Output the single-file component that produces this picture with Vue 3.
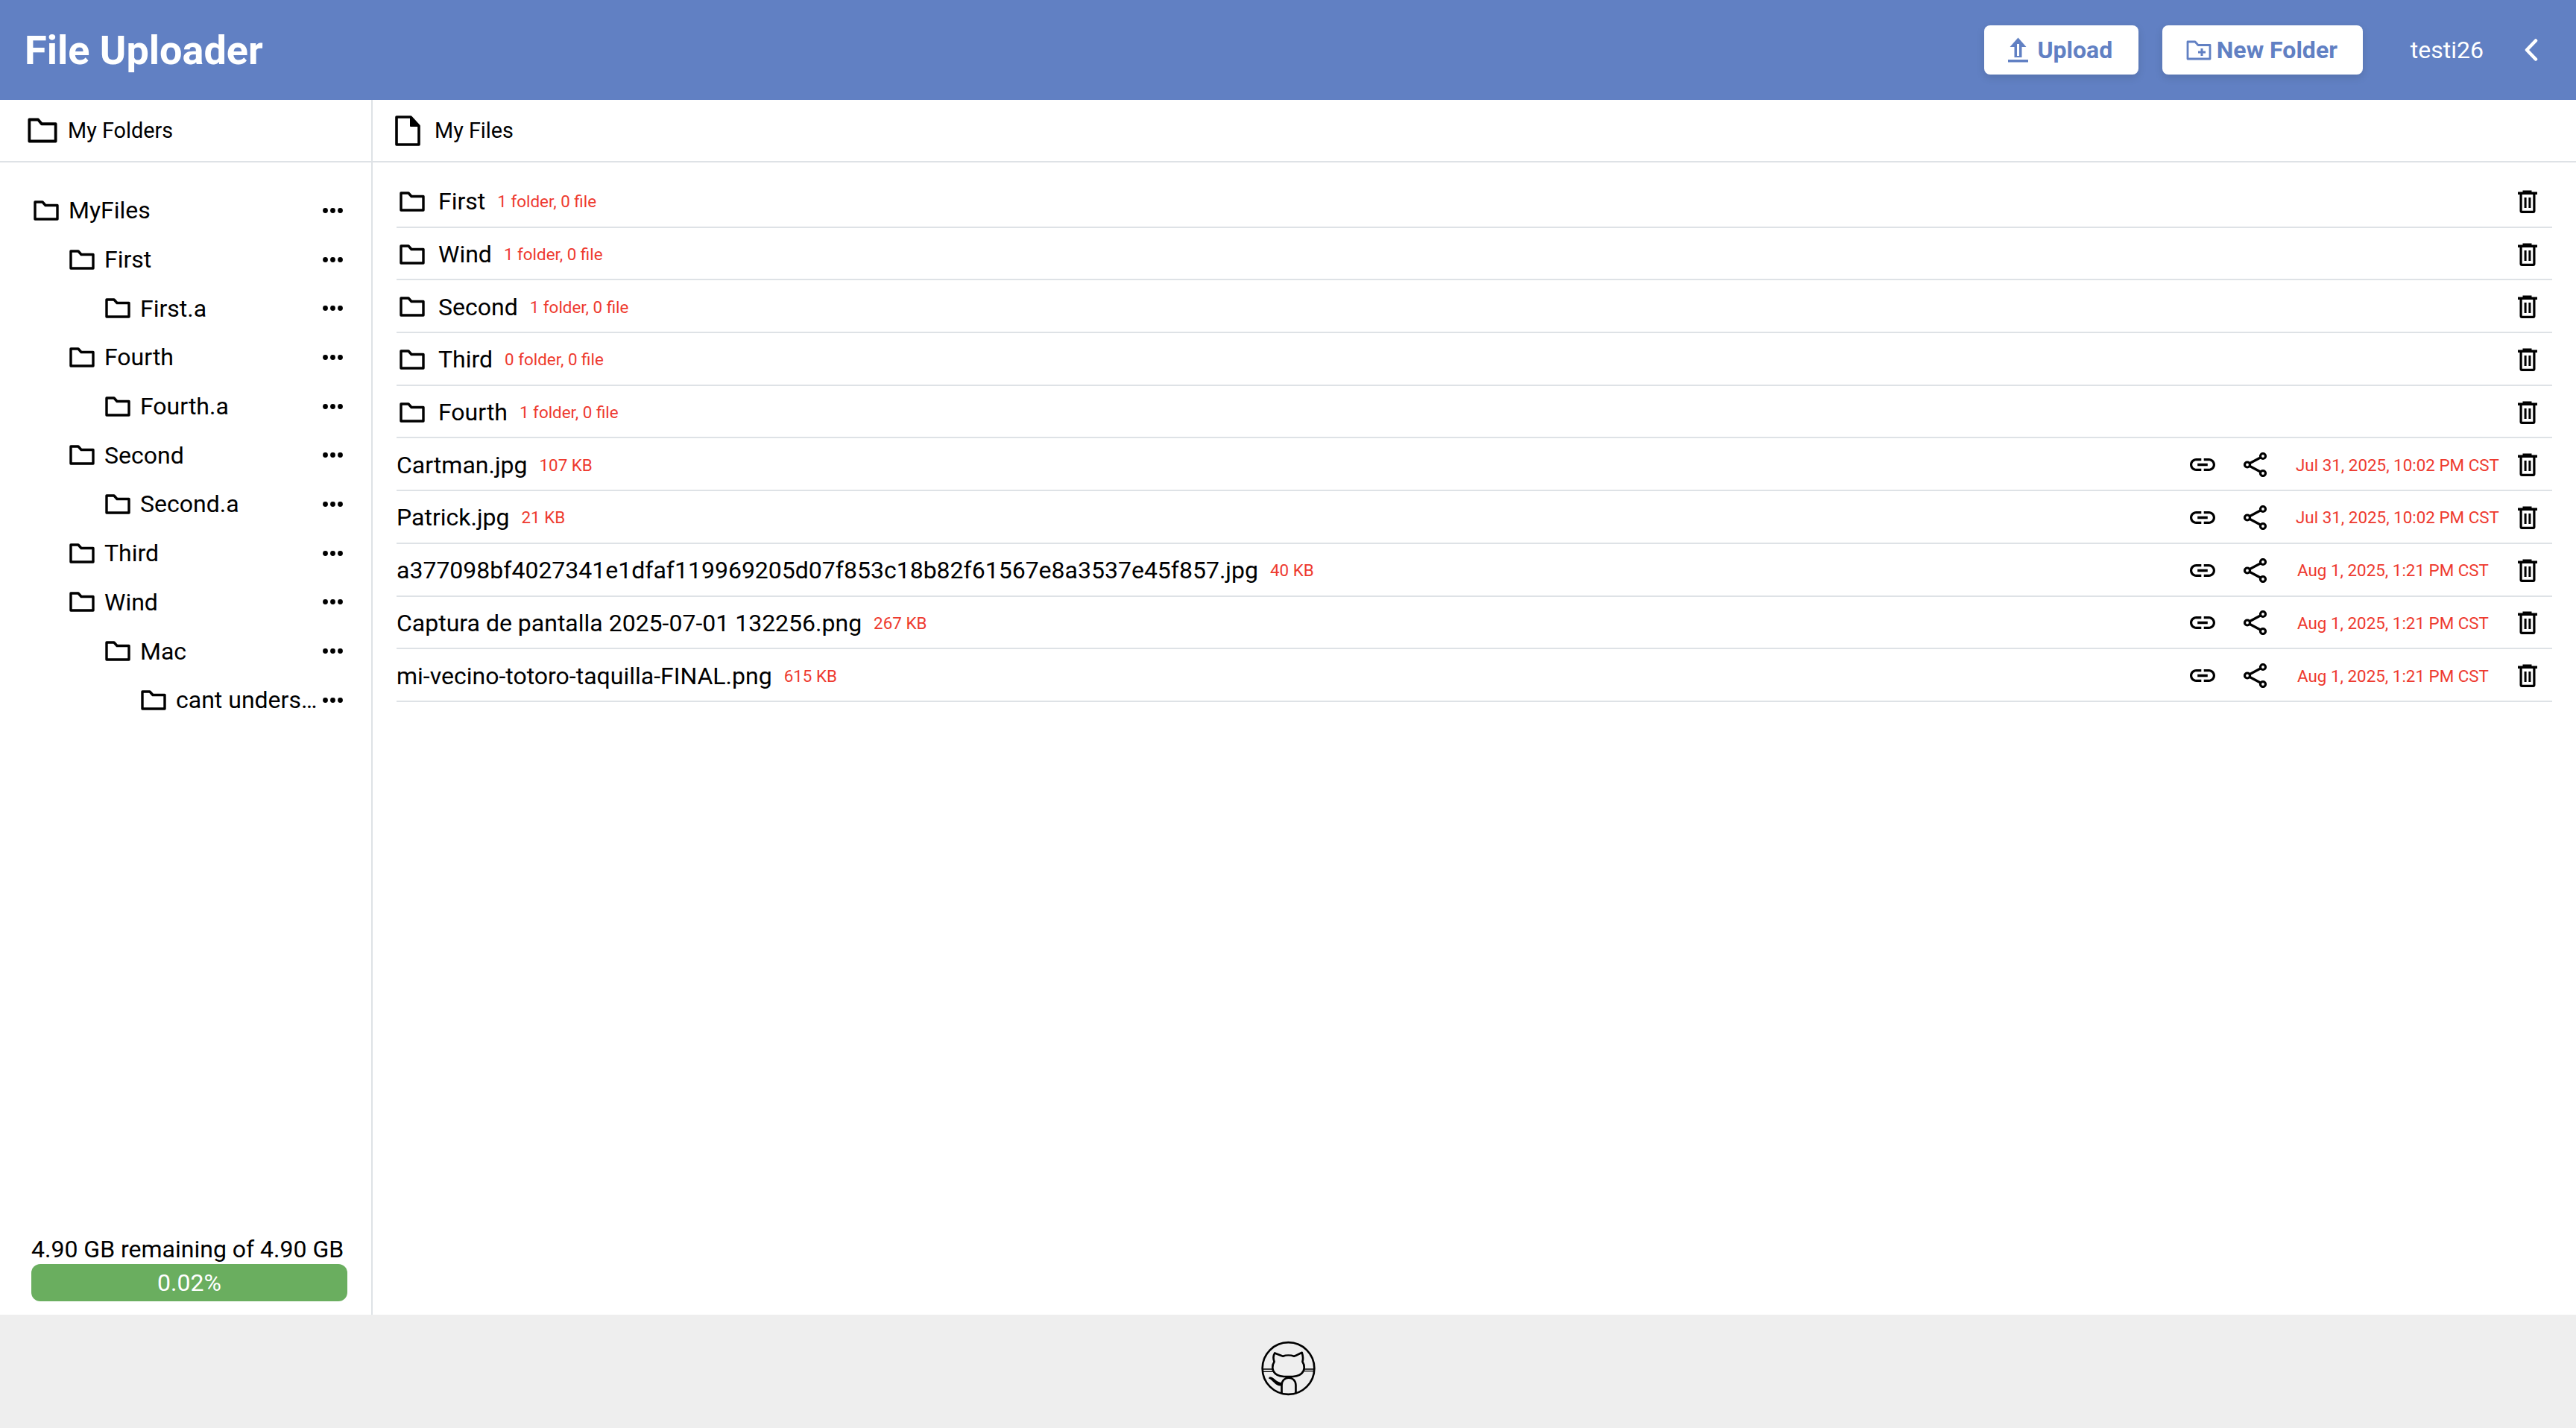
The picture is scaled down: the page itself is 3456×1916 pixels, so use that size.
<template>
  <div class="app">
    <header class="topbar">
      <h1 class="brand">File Uploader</h1>
      <div class="top-actions">
        <button class="btn btn-upload">
          <svg class="btn-icon" width="27" height="34" viewBox="0 0 27 34">
            <path d="M13.5 0.5 L24.5 13 H18.5 V27 H8.5 V13 H2.5 Z" fill="currentColor" />
            <rect x="12" y="9" width="3" height="16" fill="#fff" />
            <rect x="0" y="30" width="27" height="3.5" fill="currentColor" />
          </svg>
          <span>Upload</span>
        </button>
        <button class="btn btn-folder">
          <svg class="btn-icon" width="34" height="27" viewBox="0 0 34 27">
            <path d="M2 2 H12 L16 6.5 H32 V25 H2 Z" fill="none" stroke="currentColor" stroke-width="2.8" stroke-linejoin="round" />
            <path d="M21 11 V21 M16 16 H26" stroke="currentColor" stroke-width="3" />
          </svg>
          <span>New Folder</span>
        </button>
        <span class="username">testi26</span>
        <svg class="chevron" width="18" height="30" viewBox="0 0 18 30">
          <path d="M15 2.5 L3 15 L15 27.5" fill="none" stroke="#fff" stroke-width="4.5" stroke-linecap="round" stroke-linejoin="round" />
        </svg>
      </div>
    </header>

    <div class="body">
      <aside class="sidebar">
        <div class="pane-title side-title">
          <svg width="40" height="34" viewBox="0 0 34 27" preserveAspectRatio="none">
            <path :d="folderPath" fill="none" stroke="#000" stroke-width="3.2" stroke-linejoin="round" />
          </svg>
          <span>My Folders</span>
        </div>
        <ul class="tree">
          <li v-for="node in tree" :key="node.id" class="tree-row" :style="{ paddingLeft: node.depth * 48 + 'px' }">
            <svg class="folder" width="34" height="27" viewBox="0 0 34 27">
              <path :d="folderPath" fill="none" stroke="#000" stroke-width="3.4" stroke-linejoin="round" />
            </svg>
            <span class="tree-name">{{ node.name }}</span>
            <svg class="dots" width="27" height="7" viewBox="0 0 27 7">
              <circle cx="3.5" cy="3.5" r="3.4" />
              <circle cx="13.5" cy="3.5" r="3.4" />
              <circle cx="23.5" cy="3.5" r="3.4" />
            </svg>
          </li>
        </ul>
        <div class="storage">
          <div class="storage-text">4.90 GB remaining of 4.90 GB</div>
          <div class="storage-bar">0.02%</div>
        </div>
      </aside>

      <main class="content">
        <div class="pane-title files-title">
          <svg width="34" height="41" viewBox="0 0 34 41">
            <path d="M2 2 H21 L32 14 V39 H2 Z" fill="none" stroke="#000" stroke-width="3.6" stroke-linejoin="round" />
            <path d="M21 2 L32 14 H21 Z" stroke="#000" stroke-width="2" stroke-linejoin="round" />
          </svg>
          <span>My Files</span>
        </div>
        <ul class="rows">
          <li v-for="dir in folders" :key="dir.name" class="row">
            <svg class="row-folder" width="34" height="27" viewBox="0 0 34 27">
              <path :d="folderPath" fill="none" stroke="#000" stroke-width="3.4" stroke-linejoin="round" />
            </svg>
            <span class="row-name">{{ dir.name }}</span>
            <span class="meta">{{ dir.meta }}</span>
            <svg class="trash trash-end" width="26" height="31" viewBox="0 0 26 31">
              <path :d="trashLid" />
              <path :d="trashBody" fill="none" stroke="#000" stroke-width="3.2" />
              <rect x="8.6" y="10" width="3" height="14" />
              <rect x="14.4" y="10" width="3" height="14" />
            </svg>
          </li>
          <li v-for="file in files" :key="file.name" class="row">
            <span class="row-name">{{ file.name }}</span>
            <span class="meta">{{ file.size }}</span>
            <svg class="link" width="34" height="17" viewBox="2 7 20 10">
              <path d="M3.9 12c0-1.71 1.39-3.1 3.1-3.1h4V7H7c-2.76 0-5 2.24-5 5s2.24 5 5 5h4v-1.9H7c-1.71 0-3.1-1.39-3.1-3.1zM8 13h8v-2H8v2zm9-6h-4v1.9h4c1.71 0 3.1 1.39 3.1 3.1s-1.39 3.1-3.1 3.1h-4V17h4c2.76 0 5-2.24 5-5s-2.24-5-5-5z" />
            </svg>
            <svg class="share" width="31" height="33" viewBox="0 0 31 33">
              <path d="M22.5 7 L8.5 14.5 M8.5 18.5 L22.5 26" stroke="#000" stroke-width="3.2" fill="none" />
              <circle cx="26" cy="5" r="3.5" fill="none" stroke="#000" stroke-width="3.2" />
              <circle cx="5" cy="16.5" r="3.5" fill="none" stroke="#000" stroke-width="3.2" />
              <circle cx="26" cy="28" r="3.5" fill="none" stroke="#000" stroke-width="3.2" />
            </svg>
            <span class="date" :class="{ 'date-short': file.date.startsWith('Aug') }">{{ file.date }}</span>
            <svg class="trash" width="26" height="31" viewBox="0 0 26 31">
              <path :d="trashLid" />
              <path :d="trashBody" fill="none" stroke="#000" stroke-width="3.2" />
              <rect x="8.6" y="10" width="3" height="14" />
              <rect x="14.4" y="10" width="3" height="14" />
            </svg>
          </li>
        </ul>
      </main>
    </div>

    <footer class="footer">
      <svg width="73" height="74" viewBox="95 86 220 222">
        <circle cx="205" cy="197" r="105" fill="none" stroke="#000" stroke-width="8" />
        <path d="M150 135 C165 140 178 147 183 148 C195 143 215 143 228 148 C235 146 250 138 260 133 C265 150 265 160 262 170 C272 185 272 205 258 218 C240 235 170 235 152 218 C138 205 138 185 148 170 C144 160 144 145 150 135 Z" fill="none" stroke="#000" stroke-width="8" stroke-linejoin="round" />
        <path d="M178 300 V265 C178 225 235 225 235 265 V300" fill="none" stroke="#000" stroke-width="8" />
        <path d="M128 232 C145 228 150 250 178 255 V268 C150 270 145 245 125 238 Z" />
        <path d="M102 200 H140 M102 210 H142 M270 200 H308 M268 208 H308" stroke="#000" stroke-width="4" fill="none" />
      </svg>
    </footer>
  </div>
</template>

<script setup>
const folderPath = 'M2 2 H12 L16 6.5 H32 V25 H2 Z'
const trashLid = 'M6.5 0.5 H18.5 V2.5 H26 V6 H0 V2.5 H6.5 Z'
const trashBody = 'M4.1 5 V28 Q4.1 29.3 5.4 29.3 H20.6 Q21.9 29.3 21.9 28 V5'

const tree = [
  { id: 1, name: 'MyFiles', depth: 0 },
  { id: 2, name: 'First', depth: 1 },
  { id: 3, name: 'First.a', depth: 2 },
  { id: 4, name: 'Fourth', depth: 1 },
  { id: 5, name: 'Fourth.a', depth: 2 },
  { id: 6, name: 'Second', depth: 1 },
  { id: 7, name: 'Second.a', depth: 2 },
  { id: 8, name: 'Third', depth: 1 },
  { id: 9, name: 'Wind', depth: 1 },
  { id: 10, name: 'Mac', depth: 2 },
  { id: 11, name: 'cant unders…', depth: 3 }
]

const folders = [
  { name: 'First', meta: '1 folder, 0 file' },
  { name: 'Wind', meta: '1 folder, 0 file' },
  { name: 'Second', meta: '1 folder, 0 file' },
  { name: 'Third', meta: '0 folder, 0 file' },
  { name: 'Fourth', meta: '1 folder, 0 file' }
]

const files = [
  { name: 'Cartman.jpg', size: '107 KB', date: 'Jul 31, 2025, 10:02 PM CST' },
  { name: 'Patrick.jpg', size: '21 KB', date: 'Jul 31, 2025, 10:02 PM CST' },
  { name: 'a377098bf4027341e1dfaf119969205d07f853c18b82f61567e8a3537e45f857.jpg', size: '40 KB', date: 'Aug 1, 2025, 1:21 PM CST' },
  { name: 'Captura de pantalla 2025-07-01 132256.png', size: '267 KB', date: 'Aug 1, 2025, 1:21 PM CST' },
  { name: 'mi-vecino-totoro-taquilla-FINAL.png', size: '615 KB', date: 'Aug 1, 2025, 1:21 PM CST' }
]
</script>

<style>
body {
  margin: 0;
}
</style>

<style scoped>
.app {
  display: flex;
  flex-direction: column;
  height: 100vh;
  font-family: Roboto, "Liberation Sans", sans-serif;
  color: #000;
  background: #fff;
}

.topbar {
  flex: 0 0 134px;
  display: flex;
  align-items: center;
  justify-content: space-between;
  padding: 0 51px 0 33px;
  background: #6180c3;
}

.brand {
  margin: 0;
  font-size: 54px;
  font-weight: 700;
  color: #fff;
}

.top-actions {
  display: flex;
  align-items: center;
}

.btn {
  display: flex;
  align-items: center;
  justify-content: center;
  height: 66px;
  padding: 0 2px 0 0;
  border: none;
  border-radius: 8px;
  background: #fff;
  color: #6180c3;
  font: 700 32px Roboto, sans-serif;
  box-shadow: 0 4px 12px rgba(0, 0, 0, 0.12);
}

.btn-upload {
  width: 207px;
  gap: 12px;
}

.btn-folder {
  width: 269px;
  margin-left: 32px;
  gap: 7px;
}

.username {
  margin-left: 64px;
  font-size: 32px;
  color: #fff;
}

.chevron {
  margin-left: 55px;
}

.body {
  flex: 1;
  display: flex;
  min-height: 0;
}

.sidebar {
  flex: 0 0 500px;
  min-width: 0;
  box-sizing: border-box;
  display: flex;
  flex-direction: column;
  border-right: 2px solid #dee2e6;
}

.pane-title {
  flex: 0 0 84px;
  box-sizing: border-box;
  display: flex;
  align-items: center;
  border-bottom: 2px solid #dee2e6;
  font-size: 28.8px;
}

.side-title {
  gap: 14px;
  padding-left: 37px;
}

.files-title {
  gap: 19px;
  padding-left: 30px;
}

.tree {
  flex: 1;
  margin: 0;
  padding: 31.5px 38px 0 45px;
  list-style: none;
}

.tree-row {
  display: flex;
  align-items: center;
  height: 65.7px;
}

.folder {
  flex-shrink: 0;
}

.tree-name {
  flex: 1;
  min-width: 0;
  margin-left: 13px;
  font-size: 32px;
  white-space: nowrap;
}

.dots {
  flex-shrink: 0;
  margin-left: 10px;
}

.storage {
  padding: 0 32px 18px 42px;
}

.storage-text {
  font-size: 32px;
  line-height: 40px;
  white-space: nowrap;
}

.storage-bar {
  height: 50px;
  line-height: 50px;
  border-radius: 12px;
  background: #6aae5f;
  color: #fff;
  font-size: 32px;
  text-align: center;
}

.content {
  flex: 1;
  min-width: 0;
  display: flex;
  flex-direction: column;
}

.rows {
  margin: 0;
  padding: 17px 32px 0 32px;
  list-style: none;
}

.row {
  box-sizing: border-box;
  display: flex;
  align-items: center;
  height: 70.7px;
  padding: 2px 20px 0 0;
  border-bottom: 2px solid #dee2e6;
}

.row-folder {
  margin-left: 4px;
  margin-right: 18px;
  flex-shrink: 0;
}

.row-name {
  font-size: 32px;
  white-space: nowrap;
}

.meta {
  margin-left: 16px;
  font-size: 22.4px;
  color: #ee3a2f;
  white-space: nowrap;
}

.link {
  margin-left: auto;
  flex-shrink: 0;
}

.share {
  margin-left: 38px;
  flex-shrink: 0;
}

.date {
  flex: 0 0 298px;
  box-sizing: border-box;
  margin-left: 39px;
  font-size: 22.4px;
  color: #ee3a2f;
  white-space: nowrap;
}

.date-short {
  padding-left: 2px;
}

.trash {
  flex-shrink: 0;
}

.trash-end {
  margin-left: auto;
}

.footer {
  flex: 0 0 152px;
  box-sizing: border-box;
  display: flex;
  align-items: center;
  justify-content: center;
  padding-bottom: 8px;
  background: #eeeeee;
}
</style>
